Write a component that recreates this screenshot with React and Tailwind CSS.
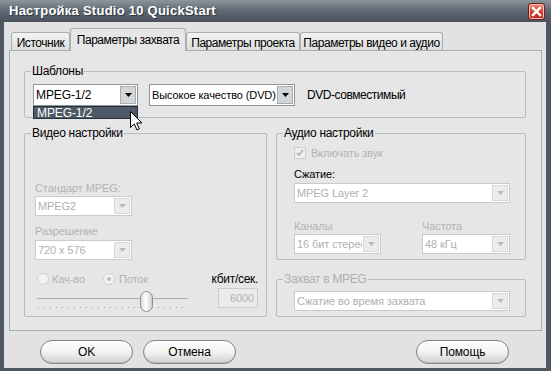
import React from 'react';

function Arrow({ disabled }) {
  return (
    <svg width="7" height="4" viewBox="0 0 7 4">
      <path d="M0 0h7L3.5 4z" fill={disabled ? '#b9bcbf' : '#000'} />
    </svg>
  );
}

function Combo({ text, className = '', disabled = false }) {
  return (
    <div
      className={`flex bg-white border ${
        disabled ? 'border-[#c6ccd0] text-[#b0b0b0]' : 'border-[#8f979d] text-black'
      } ${className}`}
    >
      <span className="flex-1 pl-[2px] flex items-center whitespace-nowrap overflow-hidden">{text}</span>
      <span
        className={`w-[16px] m-[1px] flex items-center justify-center border ${
          disabled ? 'bg-[#ebecec] border-[#d6d9dc]' : 'bg-[#d3d6d8] border-[#a6acb0]'
        }`}
      >
        <Arrow disabled={disabled} />
      </span>
    </div>
  );
}

function Group({ label, disabled = false, className = '', inner = '', children }) {
  return (
    <fieldset className={`border border-[#b5bdc2] rounded-[2px] ${className}`}>
      <legend className={`ml-[6px] px-[1px] leading-[14px] text-[12px] tracking-[-0.3px] ${disabled ? 'text-[#b0b0b0]' : 'text-black'}`}>
        {label}
      </legend>
      <div className={inner}>{children}</div>
    </fieldset>
  );
}

function Radio({ checked }) {
  return (
    <span className="w-[12px] h-[12px] rounded-full border border-[#cdd1d4] bg-[#f2f2f2] flex items-center justify-center">
      {checked && <span className="w-[4px] h-[4px] rounded-full bg-[#bcbcbc]" />}
    </span>
  );
}

function Tab({ label, active, className = '' }) {
  return (
    <div
      className={`flex items-center justify-center border border-b-0 border-[#a7afb4] rounded-t-[3px] whitespace-nowrap ${
        active
          ? 'h-[23px] -mb-[1px] bg-[#e6e6e6] z-10 relative pb-[1px]'
          : 'h-[18px] pt-[2px] bg-gradient-to-b from-[#f3f3f3] to-[#dddddd]'
      } ${className}`}
    >
      {label}
    </div>
  );
}

function PillButton({ label, className = '' }) {
  return (
    <button
      className={`h-[24px] w-[93px] rounded-full border border-[#7e858b] bg-gradient-to-b from-white via-[#f2f2f2] to-[#d2d2d2] shadow-[inset_0_-1px_0_#bdbdbd] flex items-center justify-center text-[12px] ${className}`}
    >
      {label}
    </button>
  );
}

function Slider() {
  const ticks = [];
  for (let x = 1; x < 150; x += 6) ticks.push(<rect key={x} x={x} y="19" width="1" height="1" fill="#9a9a9a" />);
  return (
    <svg width="152" height="25" viewBox="0 0 152 25">
      <rect x="0" y="10" width="151" height="1" fill="#a9adb0" />
      {ticks}
      <defs>
        <linearGradient id="thumb" x1="0" y1="0" x2="1" y2="0">
          <stop offset="0" stopColor="#d8d8d8" />
          <stop offset="0.45" stopColor="#ffffff" />
          <stop offset="1" stopColor="#c9c9c9" />
        </linearGradient>
      </defs>
      <rect x="103.5" y="3.5" width="12" height="20" rx="6" fill="url(#thumb)" stroke="#8d9398" />
    </svg>
  );
}

export default function App() {
  return (
    <div className="w-[551px] h-[371px] flex flex-col bg-[#4f5862] font-['Liberation_Sans',Arial,sans-serif] text-[11px] tracking-[-0.1px] leading-[14px] text-black select-none">
      {/* title bar */}
      <div className="h-[22px] shrink-0 flex items-center justify-between pl-[9px] pr-[6px] bg-gradient-to-b from-[#8d959d] via-[#5f6872] to-[#4a535d]">
        <span className="text-white font-bold text-[13px] tracking-[0.25px] [text-shadow:1px_1px_0_#323a42]">
          Настройка Studio 10 QuickStart
        </span>
        <span className="w-[17px] h-[17px] rounded-[3px] border border-[#7a1a14] bg-gradient-to-b from-[#ef8a7a] via-[#d7442f] to-[#b92818] shadow-[inset_0_0_0_1px_#f7c3b8] flex items-center justify-center">
          <svg width="11" height="11" viewBox="0 0 11 11">
            <path d="M2 2l7 7M9 2l-7 7" stroke="#fff" strokeWidth="2.4" strokeLinecap="square" />
          </svg>
        </span>
      </div>

      {/* body */}
      <div className="flex-1 flex flex-col bg-[#e2e2e2] border-l-4 border-r-[5px] border-b-[3px] border-[#4f5862] pl-[5px] pr-[4px]">
        {/* tabs */}
        <div className="h-[28px] flex items-end pl-[2px] text-[12px] tracking-[-0.45px]">
          <Tab label="Источник" className="w-[59px]" />
          <Tab label="Параметры захвата" active className="w-[116px]" />
          <Tab label="Параметры проекта" className="w-[114px]" />
          <Tab label="Параметры видео и аудио" className="w-[143px]" />
        </div>

        {/* panel */}
        <div className="h-[281px] border border-[#a7afb4] bg-[#e6e6e6] pl-[14px] pr-[15px]">
          <Group label="Шаблоны" className="mt-[13px]" inner="pl-[8px] pt-[6px] pb-[11px]">
            <div className="flex items-center">
              <div className="relative">
                <Combo text="MPEG-1/2" className="w-[105px] h-[22px] text-[12px]" />
                <div className="absolute left-0 top-full w-[105px] h-[13px] bg-[#4e5a67] border border-[#27303a] text-white text-[12px] pl-[3px] flex items-center z-20">
                  MPEG-1/2
                </div>
                <svg className="absolute left-[97px] top-[27px] z-30" width="13" height="20" viewBox="0 0 13 20">
                  <path d="M0.5 0.5v16l3.8-3.6 2.6 6 2.4-1-2.6-5.9h5.3z" fill="#fff" stroke="#000" strokeWidth="1" strokeLinejoin="round" />
                </svg>
              </div>
              <Combo text="Высокое качество (DVD)" className="ml-[11px] w-[146px] h-[22px] text-[11px] tracking-[-0.1px]" />
              <span className="ml-[12px] text-[12px] tracking-[-0.45px]">DVD-совместимый</span>
            </div>
          </Group>

          <div className="mt-[8px] flex gap-[9px]">
            {/* video */}
            <Group label="Видео настройки" className="w-[244px] h-[191px]" inner="pl-[10px] pr-[8px]">
              <div className="mt-[41px] text-[#b3b3b3]">Стандарт MPEG:</div>
              <Combo text="MPEG2" disabled className="mt-[1px] w-[97px] h-[20px]" />
              <div className="mt-[8px] text-[#b3b3b3]">Разрешение</div>
              <Combo text="720 x 576" disabled className="mt-[2px] w-[97px] h-[20px]" />
              <div className="mt-[12px] flex items-center pl-[2px] text-[#b3b3b3]">
                <Radio />
                <span className="ml-[3px]">Кач-во</span>
                <span className="ml-[18px]"><Radio checked /></span>
                <span className="ml-[4px]">Поток</span>
                <span className="ml-auto text-black text-[12px] tracking-[-0.3px]">кбит/сек.</span>
              </div>
              <div className="flex items-start pl-[2px]">
                <div className="mt-[2px]">
                  <Slider />
                </div>
                <div className="ml-auto mt-[2px] w-[40px] h-[20px] border border-[#c6ccd0] bg-[#ebebeb] text-[#b3b3b3] flex items-center justify-end pr-[3px]">
                  6000
                </div>
              </div>
            </Group>

            {/* audio column */}
            <div className="flex flex-col">
              <Group label="Аудио настройки" className="w-[250px] h-[134px]" inner="pl-[17px]">
                <div className="mt-[6px] flex items-center">
                  <span className="w-[12px] h-[12px] border border-[#c9cdd1] bg-[#eeeeee] flex items-center justify-center">
                    <svg width="8" height="8" viewBox="0 0 8 8">
                      <path d="M1 4l2 2 4-5" fill="none" stroke="#b5b5b5" strokeWidth="1.8" />
                    </svg>
                  </span>
                  <span className="ml-[5px] text-[#b3b3b3]">Включать звук</span>
                </div>
                <div className="mt-[7px]">Сжатие:</div>
                <Combo text="MPEG Layer 2" disabled className="mt-[2px] w-[216px] h-[20px]" />
                <div className="mt-[16px] flex text-[#b3b3b3]">
                  <span className="w-[128px]">Каналы</span>
                  <span>Частота</span>
                </div>
                <div className="mt-[1px] flex">
                  <Combo text="16 бит стерео" disabled className="w-[87px] h-[20px]" />
                  <Combo text="48 кГц" disabled className="ml-[41px] w-[88px] h-[20px]" />
                </div>
              </Group>
              <Group label="Захват в MPEG" disabled className="mt-[12px] w-[250px] h-[45px]" inner="pl-[17px]">
                <Combo text="Сжатие во время захвата" disabled className="mt-[5px] w-[216px] h-[20px]" />
              </Group>
            </div>
          </div>
        </div>

        {/* buttons */}
        <div className="mt-[9px] flex pl-[31px] pr-[33px]">
          <PillButton label="OK" />
          <PillButton label="Отмена" className="ml-[10px]" />
          <PillButton label="Помощь" className="ml-auto" />
        </div>
      </div>
    </div>
  );
}
